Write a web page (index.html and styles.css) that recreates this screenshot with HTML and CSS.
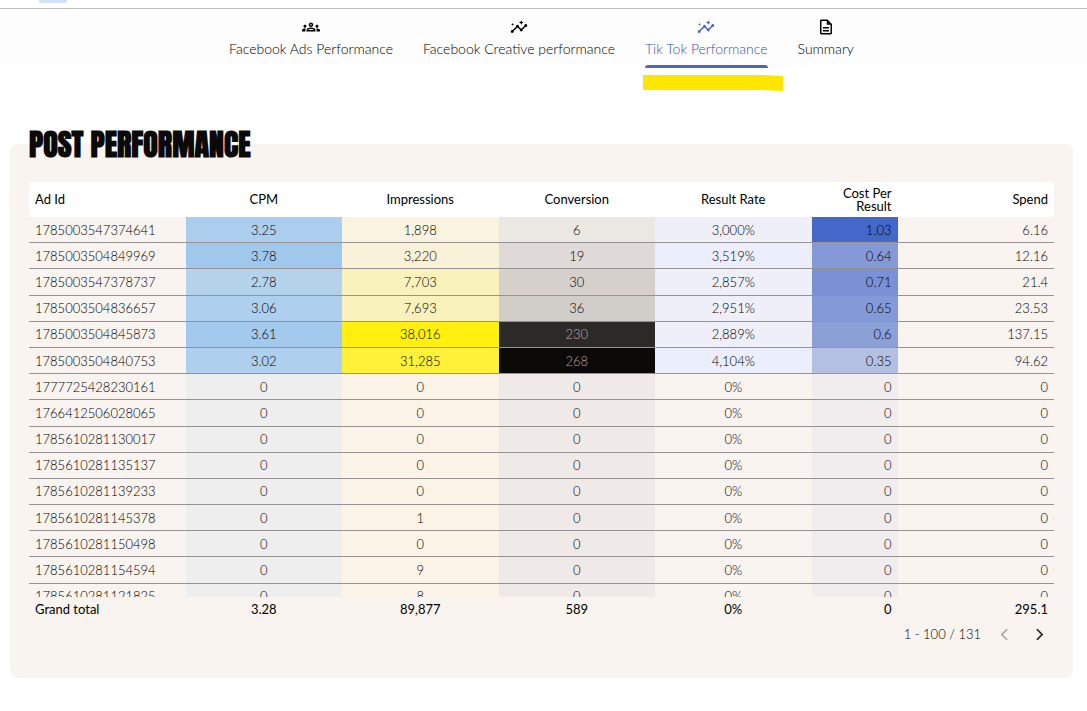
FILE: index.html
```html
<!DOCTYPE html>
<html lang="en">
<head>
<meta charset="utf-8">
<title>Tik Tok Performance</title>
<link rel="stylesheet" href="styles.css">
</head>
<body>
<header class="topbar"><div class="topbar-chip"></div></header>
<nav class="tabs" aria-label="Report pages">
  <a class="tab" href="#ads">
    <svg class="tab-icon" viewBox="0 0 24 24" aria-hidden="true"><path d="M4 13c1.1 0 2-.9 2-2s-.9-2-2-2-2 .9-2 2 .9 2 2 2zm1.13 1.1C4.76 14.04 4.39 14 4 14c-.99 0-1.93.21-2.78.58C.48 14.9 0 15.62 0 16.43V18h4.5v-1.61c0-.83.23-1.61.63-2.29zM20 13c1.1 0 2-.9 2-2s-.9-2-2-2-2 .9-2 2 .9 2 2 2zm4 3.43c0-.81-.48-1.53-1.22-1.85A6.95 6.95 0 0 0 20 14c-.39 0-.76.04-1.13.1.4.68.63 1.46.63 2.29V18H24v-1.57zm-7.76-2.78c-1.17-.52-2.61-.9-4.24-.9s-3.07.39-4.24.9A2.99 2.99 0 0 0 6 16.39V18h12v-1.61c0-1.18-.68-2.26-1.76-2.74zM8.07 16c.09-.23.13-.39.91-.69.97-.38 1.99-.56 3.02-.56s2.05.18 3.02.56c.77.3.81.46.91.69H8.07zM12 8c.55 0 1 .45 1 1s-.45 1-1 1-1-.45-1-1 .45-1 1-1m0-2c-1.66 0-3 1.34-3 3s1.34 3 3 3 3-1.340 3-3-1.340-3-3-3z"/></svg>
    <span>Facebook Ads Performance</span>
  </a>
  <a class="tab" href="#creative">
    <svg class="tab-icon" viewBox="0 0 24 24" aria-hidden="true"><path d="M21 8c-1.450 0-2.260 1.440-1.930 2.510l-3.550 3.560c-.3-.09-.74-.09-1.040 0l-2.550-2.550C12.270 10.450 11.460 9 10 9c-1.450 0-2.270 1.440-1.930 2.520l-4.560 4.550C2.440 15.740 1 16.550 1 18c0 1.100.9 2 2 2 1.450 0 2.260-1.440 1.930-2.510l4.550-4.560c.3.09.74.09 1.040 0l2.550 2.550C12.730 16.550 13.540 18 15 18c1.450 0 2.270-1.440 1.930-2.520l3.560-3.550C21.560 12.260 23 11.450 23 10c0-1.100-.9-2-2-2z"/><path d="M15 9l.94-2.070L18 6l-2.060-.93L15 3l-.92 2.070L12 6l2.080.93zM3.500 11L4 9l2-.5L4 8l-.5-2L3 8l-2 .5L3 9z"/></svg>
    <span>Facebook Creative performance</span>
  </a>
  <a class="tab tab-active" href="#tiktok" aria-current="page">
    <svg class="tab-icon" viewBox="0 0 24 24" aria-hidden="true"><path d="M21 8c-1.450 0-2.260 1.440-1.930 2.510l-3.550 3.560c-.3-.09-.74-.09-1.040 0l-2.550-2.550C12.270 10.450 11.460 9 10 9c-1.450 0-2.270 1.440-1.930 2.520l-4.560 4.550C2.440 15.740 1 16.550 1 18c0 1.100.9 2 2 2 1.450 0 2.260-1.440 1.930-2.510l4.550-4.560c.3.09.74.09 1.040 0l2.550 2.550C12.730 16.550 13.540 18 15 18c1.450 0 2.270-1.440 1.930-2.520l3.560-3.550C21.560 12.260 23 11.450 23 10c0-1.100-.9-2-2-2z"/><path d="M15 9l.94-2.070L18 6l-2.060-.93L15 3l-.92 2.070L12 6l2.080.93zM3.500 11L4 9l2-.5L4 8l-.5-2L3 8l-2 .5L3 9z"/></svg>
    <span>Tik Tok Performance</span>
    <svg class="marker" viewBox="0 0 140 16" aria-hidden="true"><path d="M0 0H118C126 0 130 1 140 1V16C132 16 126 15 118 15H0Z"/></svg>
  </a>
  <a class="tab" href="#summary">
    <svg class="tab-icon" viewBox="0 0 24 24" aria-hidden="true"><path d="M8 16h8v2H8zm0-4h8v2H8zm6-10H6c-1.100 0-2 .9-2 2v16c0 1.100.89 2 1.990 2H18c1.100 0 2-.9 2-2V8l-6-6zm4 18H6V4h7v5h5v11z"/></svg>
    <span>Summary</span>
  </a>
</nav>
<main class="panel">
  <h1 class="title">POST PERFORMANCE</h1>
  <div class="table-view">
    <table class="report">
      <colgroup><col><col><col><col><col><col class="col-cost"><col></colgroup>
      <thead>
        <tr><th scope="col">Ad Id</th><th scope="col">CPM</th><th scope="col">Impressions</th><th scope="col">Conversion</th><th scope="col">Result Rate</th><th scope="col">Cost Per Result</th><th scope="col">Spend</th></tr>
      </thead>
      <tbody>
        <tr><td>1785003547374641</td><td class="cpm-3">3.25</td><td class="imp-1">1,898</td><td class="con-1">6</td><td class="rate-1">3,000%</td><td class="cost-6">1.03</td><td>6.16</td></tr>
        <tr><td>1785003504849969</td><td class="cpm-5">3.78</td><td class="imp-2">3,220</td><td class="con-2">19</td><td class="rate-2">3,519%</td><td class="cost-4">0.64</td><td>12.16</td></tr>
        <tr><td>1785003547378737</td><td class="cpm-1">2.78</td><td class="imp-3">7,703</td><td class="con-3">30</td><td class="rate-1">2,857%</td><td class="cost-5">0.71</td><td>21.4</td></tr>
        <tr><td>1785003504836657</td><td class="cpm-2">3.06</td><td class="imp-3">7,693</td><td class="con-4">36</td><td class="rate-1">2,951%</td><td class="cost-4">0.65</td><td>23.53</td></tr>
        <tr><td>1785003504845873</td><td class="cpm-4">3.61</td><td class="imp-5">38,016</td><td class="con-5">230</td><td class="rate-1">2,889%</td><td class="cost-3">0.6</td><td>137.15</td></tr>
        <tr><td>1785003504840753</td><td class="cpm-2">3.02</td><td class="imp-4">31,285</td><td class="con-6">268</td><td class="rate-3">4,104%</td><td class="cost-2">0.35</td><td>94.62</td></tr>
        <tr><td>1777725428230161</td><td>0</td><td>0</td><td>0</td><td>0%</td><td>0</td><td>0</td></tr>
        <tr><td>1766412506028065</td><td>0</td><td>0</td><td>0</td><td>0%</td><td>0</td><td>0</td></tr>
        <tr><td>1785610281130017</td><td>0</td><td>0</td><td>0</td><td>0%</td><td>0</td><td>0</td></tr>
        <tr><td>1785610281135137</td><td>0</td><td>0</td><td>0</td><td>0%</td><td>0</td><td>0</td></tr>
        <tr><td>1785610281139233</td><td>0</td><td>0</td><td>0</td><td>0%</td><td>0</td><td>0</td></tr>
        <tr><td>1785610281145378</td><td>0</td><td>1</td><td>0</td><td>0%</td><td>0</td><td>0</td></tr>
        <tr><td>1785610281150498</td><td>0</td><td>0</td><td>0</td><td>0%</td><td>0</td><td>0</td></tr>
        <tr><td>1785610281154594</td><td>0</td><td>9</td><td>0</td><td>0%</td><td>0</td><td>0</td></tr>
        <tr><td>1785610281121825</td><td>0</td><td>8</td><td>0</td><td>0%</td><td>0</td><td>0</td></tr>
      </tbody>
    </table>
  </div>
  <table class="report totals">
    <colgroup><col><col><col><col><col><col class="col-cost"><col></colgroup>
    <tbody>
      <tr><th scope="row">Grand total</th><td>3.28</td><td>89,877</td><td>589</td><td>0%</td><td>0</td><td>295.1</td></tr>
    </tbody>
  </table>
  <div class="pager">
    <span>1 - 100 / 131</span>
    <button class="page-button" type="button" aria-label="Previous page" disabled><svg viewBox="0 0 8 12"><path d="M7 0L1 6l6 6"/></svg></button>
    <button class="page-button" type="button" aria-label="Next page"><svg viewBox="0 0 8 12"><path d="M1 0l6 6-6 6"/></svg></button>
  </div>
</main>
</body>
</html>
```
FILE: styles.css
```css
* { box-sizing: border-box; }

body {
  margin: 0;
  background: #fff;
  color: #000;
  font-family: Lato, "Open Sans", sans-serif;
  font-size: 13px;
  font-weight: 300;
}

.topbar {
  height: 9px;
  padding-left: 39px;
  border-bottom: 1px solid #bdbfc1;
}

.topbar-chip {
  width: 28px;
  height: 3px;
  border-radius: 0 0 2px 2px;
  background: #d3e3fd;
}

.tabs {
  display: flex;
  justify-content: center;
  gap: 30px;
  height: 59px;
  padding-right: 4px;
  background: #fdfdfd;
}

.tab {
  position: relative;
  display: flex;
  flex-direction: column;
  align-items: center;
  gap: 4px;
  padding-top: 9px;
  color: #000;
  font-size: 14px;
  line-height: 18px;
  white-space: nowrap;
  text-decoration: none;
}

.tab-active { color: #3453b4; }

.tab-active::after {
  content: "";
  position: absolute;
  right: 0;
  bottom: 0;
  left: 0;
  height: 3px;
  border-radius: 3px 3px 0 0;
  background: #4967bd;
}

.tab-icon {
  width: 18px;
  height: 18px;
  fill: currentColor;
}

.tab-active .tab-icon { fill: #4967bd; }

.marker {
  position: absolute;
  top: 66px;
  left: -2px;
  width: 140px;
  height: 16px;
  fill: #ffe600;
}

.panel {
  display: flow-root;
  margin: 76px 14px 0 10px;
  padding: 0 19px 32px;
  border-radius: 8px;
  background: #f9f4f0;
}

.title {
  margin: -18px 0 18px;
  color: #0c0a09;
  font-family: Impact, Anton, sans-serif;
  font-size: 30px;
  font-weight: 700;
  line-height: 38px;
}

.table-view {
  height: 415px;
  overflow: hidden;
}

.report {
  width: 100%;
  height: 428px;
  border-spacing: 0;
  table-layout: fixed;
}

.totals { height: 25px; }

.col-cost { width: 86px; }

.report th,
.report td {
  padding: 0 6px;
  text-align: center;
  line-height: 13px;
}

.report th:first-child,
.report td:first-child { text-align: left; }

.report th:nth-child(n + 6),
.report td:nth-child(n + 6) { text-align: right; }

.report thead th {
  position: sticky;
  top: 0;
  height: 35px;
  background: #fff;
  font-weight: 400;
}

.table-view tbody td {
  padding-top: 1px;
  border-bottom: 1px solid #969292;
}

.totals th,
.totals td { font-weight: 400; }

.table-view td:nth-child(2) { background: #eeeeee; }
.table-view td:nth-child(3) { background: #fcf4e7; }
.table-view td:nth-child(4) { background: #efeae7; }
.table-view td:nth-child(6) { background: #f1edef; }

.table-view .report td.cpm-1 { background: #b4d3eb; }
.table-view .report td.cpm-2 { background: #aecfed; }
.table-view .report td.cpm-3 { background: #abcdee; }
.table-view .report td.cpm-4 { background: #a3c9ec; }
.table-view .report td.cpm-5 { background: #a0c7ec; }

.table-view .report td.imp-1 { background: #f9f4df; }
.table-view .report td.imp-2 { background: #faf2d8; }
.table-view .report td.imp-3 { background: #faf2bd; }
.table-view .report td.imp-4 { background: #fff137; }
.table-view .report td.imp-5 { background: #fff00f; }

.table-view .report td.con-1 { background: #ebe7e3; }
.table-view .report td.con-2 { background: #dfdad7; }
.table-view .report td.con-3 { background: #d5d0cc; }
.table-view .report td.con-4 { background: #d1cdc8; }
.table-view .report td.con-5 { background: #2c2a29; color: #c4a8a8; }
.table-view .report td.con-6 { background: #0c0a08; color: #b89c9c; }

.table-view .report td.rate-1 { background: #efeff9; }
.table-view .report td.rate-2 { background: #eceffb; }
.table-view .report td.rate-3 { background: #ebeefc; }

.table-view .report td.cost-2 { background: #b4c0e1; }
.table-view .report td.cost-3 { background: #8ca0d8; }
.table-view .report td.cost-4 { background: #849ad8; }
.table-view .report td.cost-5 { background: #7a92d5; }
.table-view .report td.cost-6 { background: #4468ca; }

.pager {
  display: flex;
  align-items: center;
  justify-content: flex-end;
  gap: 11px;
  height: 24px;
  padding-right: 3px;
}

.page-button {
  display: flex;
  align-items: center;
  justify-content: center;
  width: 24px;
  height: 24px;
  padding: 0;
  border: 0;
  background: none;
  color: #222;
}

.page-button:disabled { color: #aaa6a3; }

.page-button svg {
  width: 7px;
  height: 11px;
  overflow: visible;
  fill: none;
  stroke: currentColor;
  stroke-width: 2;
}
```
